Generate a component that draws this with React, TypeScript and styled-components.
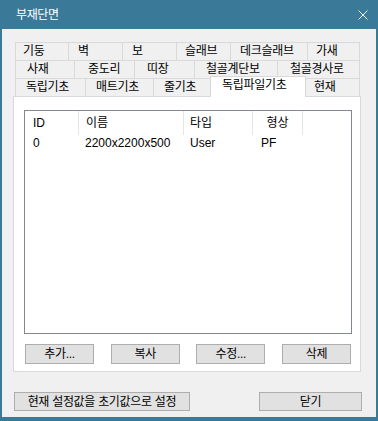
import React from "react";
import styled, { createGlobalStyle } from "styled-components";

const BLUE = "#3b7998";
const FONT = `"Liberation Sans", "Noto Sans CJK KR", sans-serif`;

const Global = createGlobalStyle`
  html, body { margin: 0; padding: 0; background: ${BLUE}; }
  body { font-family: ${FONT}; font-size: 12px; }
`;

const Window = styled.div`
  width: 378px;
  height: 421px;
  box-sizing: border-box;
  border-left: 2px solid ${BLUE};
  border-right: 2px solid ${BLUE};
  border-bottom: 4px solid ${BLUE};
  background: #f0f0f0;
  display: flex;
  flex-direction: column;
  font-family: ${FONT};
  font-size: 12px;
  color: #000;
`;

const TitleBar = styled.div`
  height: 29px;
  flex: none;
  box-sizing: border-box;
  background: ${BLUE};
  display: flex;
  align-items: center;
  justify-content: space-between;
  padding: 0 8px 2px 14px;
  color: #fff;
  letter-spacing: -0.4px;
`;

const CloseIcon = styled.svg`
  margin-top: 3px;
  display: block;
`;

const Body = styled.div`
  flex: 1;
  display: flex;
  flex-direction: column;
  padding: 13px 0 0 11px;
`;

const TabControl = styled.div`
  width: 348px;
  display: flex;
  flex-direction: column;
`;

const TabRows = styled.div`
  display: flex;
  flex-direction: column;
  margin-left: 2px;
  width: 345px;
`;

const TabRow = styled.div`
  display: flex;
  height: 18px;
`;

const Tab = styled.div<{ $w: number; $pad: number; $last?: boolean; $active?: boolean }>`
  width: ${(p) => p.$w}px;
  flex: none;
  box-sizing: border-box;
  height: ${(p) => (p.$active ? 21 : 18)}px;
  margin: ${(p) => (p.$active ? "-2px -2px 0 -2px" : "0")};
  border-top: 1px solid #d9d9d9;
  border-left: 1px solid #d9d9d9;
  border-right: ${(p) => (p.$last || p.$active ? "1px solid #d9d9d9" : "none")};
  background: ${(p) => (p.$active ? "#fff" : "#f0f0f0")};
  padding-left: ${(p) => p.$pad}px;
  line-height: 17px;
  white-space: nowrap;
  letter-spacing: -0.3px;
  position: ${(p) => (p.$active ? "relative" : "static")};
  z-index: ${(p) => (p.$active ? 1 : "auto")};
`;

const Panel = styled.div`
  height: 276px;
  box-sizing: border-box;
  border: 1px solid #d9d9d9;
  background: #fff;
  display: flex;
  flex-direction: column;
  padding: 13px 8px 0 10px;
`;

const ListView = styled.div`
  height: 224px;
  flex: none;
  box-sizing: border-box;
  border: 1px solid #828790;
  background: #fff;
  display: flex;
  flex-direction: column;
`;

const HeaderRow = styled.div`
  display: flex;
  height: 24px;
`;

const HeaderCell = styled.div<{ $w: number; $pad: number; $center?: boolean }>`
  width: ${(p) => p.$w}px;
  flex: none;
  box-sizing: border-box;
  border-right: 1px solid #e5e5e5;
  padding-left: ${(p) => (p.$center ? 0 : p.$pad)}px;
  text-align: ${(p) => (p.$center ? "center" : "left")};
  line-height: 24px;
  white-space: nowrap;
`;

const DataRow = styled.div`
  display: flex;
  height: 17px;
`;

const DataCell = styled.div<{ $w: number; $pad: number }>`
  width: ${(p) => p.$w}px;
  flex: none;
  box-sizing: border-box;
  padding-left: ${(p) => p.$pad}px;
  line-height: 16px;
  white-space: nowrap;
`;

const ButtonRow = styled.div`
  display: flex;
  justify-content: space-between;
  margin: 10px 1px 0 1px;
`;

const Button = styled.button<{ $w: number; $h?: number }>`
  width: ${(p) => p.$w}px;
  height: ${(p) => p.$h ?? 20}px;
  box-sizing: border-box;
  border: 1px solid #adadad;
  background: #e1e1e1;
  font-family: ${FONT};
  font-size: 12px;
  color: #000;
  padding: 0;
  margin: 0;
  line-height: 16px;
  letter-spacing: -0.3px;
  white-space: nowrap;
  overflow: hidden;
  text-align: center;
`;

const Footer = styled.div`
  display: flex;
  justify-content: space-between;
  width: 348px;
  margin: 20px 0 0 1px;
`;

type TabDef = { label: string; w: number; pad: number; active?: boolean };

const rows: TabDef[][] = [
  [
    { label: "기둥", w: 53, pad: 7 },
    { label: "벽", w: 54, pad: 9 },
    { label: "보", w: 54, pad: 9 },
    { label: "슬래브", w: 54, pad: 8 },
    { label: "데크슬래브", w: 77, pad: 9 },
    { label: "가새", w: 53, pad: 8 },
  ],
  [
    { label: "사재", w: 59, pad: 11 },
    { label: "중도리", w: 60, pad: 13 },
    { label: "띠장", w: 60, pad: 12 },
    { label: "철골계단보", w: 83, pad: 11 },
    { label: "철골경사로", w: 83, pad: 12 },
  ],
  [
    { label: "독립기초", w: 70, pad: 10 },
    { label: "매트기초", w: 68, pad: 10 },
    { label: "줄기초", w: 59, pad: 10 },
    { label: "독립파일기초", w: 96, pad: 11, active: true },
    { label: "현재", w: 56, pad: 9 },
  ],
];

const columns = [
  { title: "ID", w: 54, pad: 8, dpad: 8 },
  { title: "이름", w: 105, pad: 7, dpad: 6 },
  { title: "타입", w: 69, pad: 6, dpad: 6 },
  { title: "형상", w: 50, pad: 0, dpad: 8, center: true },
];

const data = [["0", "2200x2200x500", "User", "PF"]];

export default function App() {
  return (
    <>
      <Global />
      <Window>
        <TitleBar>
          <span>부재단면</span>
          <CloseIcon width="10" height="10" viewBox="0 0 10 10">
            <path d="M0.5 0.5 L9.5 9.5 M9.5 0.5 L0.5 9.5" stroke="#e8eef2" strokeWidth="1" fill="none" />
          </CloseIcon>
        </TitleBar>
        <Body>
          <TabControl>
            <TabRows>
              {rows.map((row, ri) => (
                <TabRow key={ri}>
                  {row.map((t, ti) => (
                    <Tab key={t.label} $w={t.w} $pad={t.pad} $last={ti === row.length - 1} $active={t.active}>
                      {t.label}
                    </Tab>
                  ))}
                </TabRow>
              ))}
            </TabRows>
            <Panel>
              <ListView>
                <HeaderRow>
                  {columns.map((c) => (
                    <HeaderCell key={c.title} $w={c.w} $pad={c.pad} $center={c.center}>
                      {c.title}
                    </HeaderCell>
                  ))}
                </HeaderRow>
                {data.map((r, i) => (
                  <DataRow key={i}>
                    {r.map((v, j) => (
                      <DataCell key={j} $w={columns[j].w} $pad={columns[j].dpad}>
                        {v}
                      </DataCell>
                    ))}
                  </DataRow>
                ))}
              </ListView>
              <ButtonRow>
                <Button $w={69}>추가...</Button>
                <Button $w={69}>복사</Button>
                <Button $w={69}>수정...</Button>
                <Button $w={69}>삭제</Button>
              </ButtonRow>
            </Panel>
          </TabControl>
          <Footer>
            <Button $w={176} $h={19}>현재 설정값을 초기값으로 설정</Button>
            <Button $w={103} $h={19}>닫기</Button>
          </Footer>
        </Body>
      </Window>
    </>
  );
}
